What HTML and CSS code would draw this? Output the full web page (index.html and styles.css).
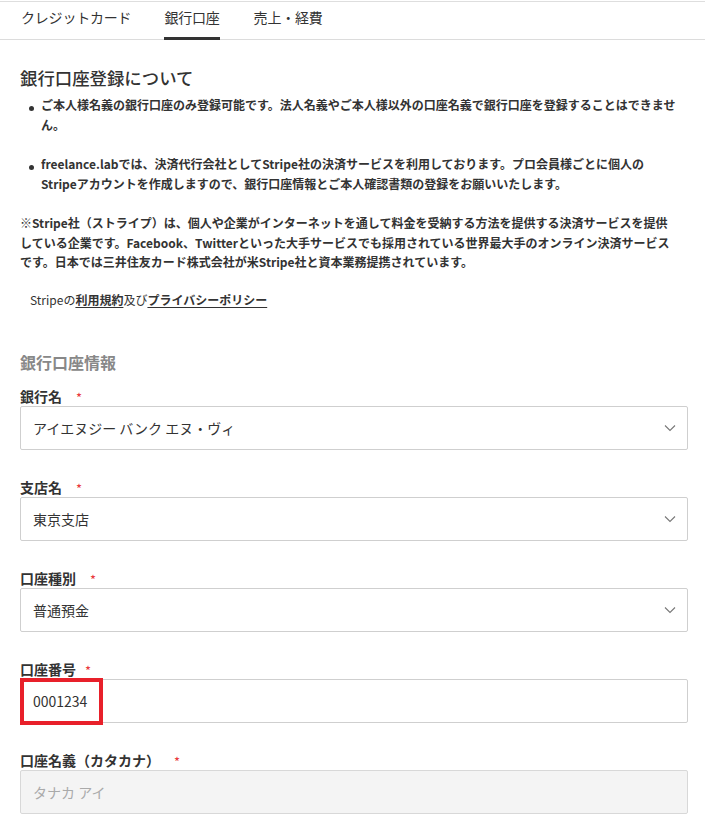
FILE: index.html
```html
<!DOCTYPE html>
<html lang="ja">
<head>
<meta charset="utf-8">
<title>銀行口座</title>
<link rel="stylesheet" href="styles.css">
</head>
<body>
<nav class="tabs">
  <a class="tab">クレジットカード</a>
  <a class="tab active">銀行口座</a>
  <a class="tab">売上・経費</a>
</nav>
<main class="content">
  <section class="intro">
    <h2 class="title">銀行口座登録について</h2>
    <ul class="notes">
      <li>ご本人様名義の銀行口座のみ登録可能です。法人名義やご本人様以外の口座名義で銀行口座を登録することはできません。</li>
      <li>freelance.labでは、決済代行会社としてStripe社の決済サービスを利用しております。プロ会員様ごとに個人のStripeアカウントを作成しますので、銀行口座情報とご本人確認書類の登録をお願いいたします。</li>
    </ul>
    <p class="remark">※Stripe社（ストライプ）は、個人や企業がインターネットを通して料金を受納する方法を提供する決済サービスを提供している企業です。Facebook、Twitterといった大手サービスでも採用されている世界最大手のオンライン決済サービスです。日本では三井住友カード株式会社が米Stripe社と資本業務提携されています。</p>
    <p class="terms">Stripeの<a class="link">利用規約</a>及び<a class="link">プライバシーポリシー</a></p>
  </section>

  <h3 class="section">銀行口座情報</h3>

  <div class="field">
    <label class="label">銀行名<span class="req">*</span></label>
    <div class="control select">
      <span class="value">アイエヌジー バンク エヌ・ヴィ</span>
      <svg class="chev" width="12" height="8" viewBox="0 0 12 8"><path d="M1 1.5 L6 6.5 L11 1.5" fill="none" stroke="#777" stroke-width="1.1"/></svg>
    </div>
  </div>

  <div class="field">
    <label class="label">支店名<span class="req">*</span></label>
    <div class="control select">
      <span class="value">東京支店</span>
      <svg class="chev" width="12" height="8" viewBox="0 0 12 8"><path d="M1 1.5 L6 6.5 L11 1.5" fill="none" stroke="#777" stroke-width="1.1"/></svg>
    </div>
  </div>

  <div class="field">
    <label class="label">口座種別<span class="req">*</span></label>
    <div class="control select">
      <span class="value">普通預金</span>
      <svg class="chev" width="12" height="8" viewBox="0 0 12 8"><path d="M1 1.5 L6 6.5 L11 1.5" fill="none" stroke="#777" stroke-width="1.1"/></svg>
    </div>
  </div>

  <div class="field">
    <label class="label">口座番号<span class="req req-close">*</span></label>
    <div class="control input">
      <span class="value num">0001234</span>
      <span class="highlight"></span>
    </div>
  </div>

  <div class="field">
    <label class="label">口座名義（カタカナ）<span class="req">*</span></label>
    <div class="control input disabled">
      <span class="value placeholder">タナカ アイ</span>
    </div>
  </div>
</main>
</body>
</html>
```

FILE: styles.css
```css
* { box-sizing: border-box; }
html, body { margin: 0; padding: 0; background: #fff; }
body {
  padding-top: 1px;
  font-family: "Noto Sans CJK JP", "Noto Sans", sans-serif;
  color: #333;
}
.tabs {
  display: flex;
  gap: 34px;
  padding: 0 21px 0 21px;
  border-top: 1px solid #dedede;
  border-bottom: 1px solid #dcdcdc;
  height: 39px;
}
.tab {
  font-size: 14px;
  line-height: 31px;
  height: 38px;
  color: #333;
  letter-spacing: -0.2px;
  border-bottom: 3px solid transparent;
}
.tab.active {
  border-bottom-color: #333;
  margin-left: -1px;
}
.content {
  padding: 0 17px 0 20px;
}
.intro {
  padding-right: 10px;
}
.title {
  margin: 26px 0 0;
  font-size: 17.4px;
  font-weight: 500;
  line-height: 24px;
  color: #333;
}
.notes {
  list-style: none;
  margin: 5px 0 0;
  padding: 0 0 0 21px;
}
.notes li {
  position: relative;
  font-size: 12px;
  font-weight: 700;
  line-height: 20px;
  margin-bottom: 19px;
}
.notes li::before {
  content: "";
  position: absolute;
  left: -12px;
  top: 11px;
  width: 5px;
  height: 5px;
  border-radius: 50%;
  background: #333;
}
.remark {
  margin: 0;
  font-size: 12px;
  font-weight: 700;
  line-height: 19.5px;
}
.terms {
  margin: 18px 0 0 10px;
  font-size: 12px;
  line-height: 20px;
}
.link {
  color: #333;
  font-weight: 700;
  text-decoration: underline;
  text-underline-offset: 2px;
}
.section {
  margin: 41px 0 0;
  font-size: 16px;
  font-weight: 700;
  line-height: 22px;
  color: #888;
}
.field {
  margin-top: 14px;
}
.field + .field { margin-top: 28px; }
.label {
  display: flex;
  align-items: center;
  height: 19px;
  font-size: 14px;
  font-weight: 700;
  line-height: 19px;
  color: #333;
}
.req {
  color: #e9373c;
  font-weight: 400;
  font-size: 13px;
  line-height: 1;
  margin-left: 14px;
  margin-top: 2px;
}
.req-close { margin-left: 9px; }
.control {
  position: relative;
  height: 44px;
  border: 1px solid #cfcfcf;
  border-radius: 2px;
  display: flex;
  align-items: center;
  justify-content: space-between;
  padding: 0 11px 0 12px;
  background: #fff;
}
.value {
  font-size: 14px;
  color: #333;
  font-weight: 400;
}
.num { letter-spacing: 0; }
.disabled { background: #f4f4f4; border-color: #d8d8d8; }
.placeholder { color: #aaa; }
.highlight {
  position: absolute;
  left: -1px;
  top: -2px;
  width: 83px;
  height: 47px;
  border: 4px solid #e8202a;
}
```
